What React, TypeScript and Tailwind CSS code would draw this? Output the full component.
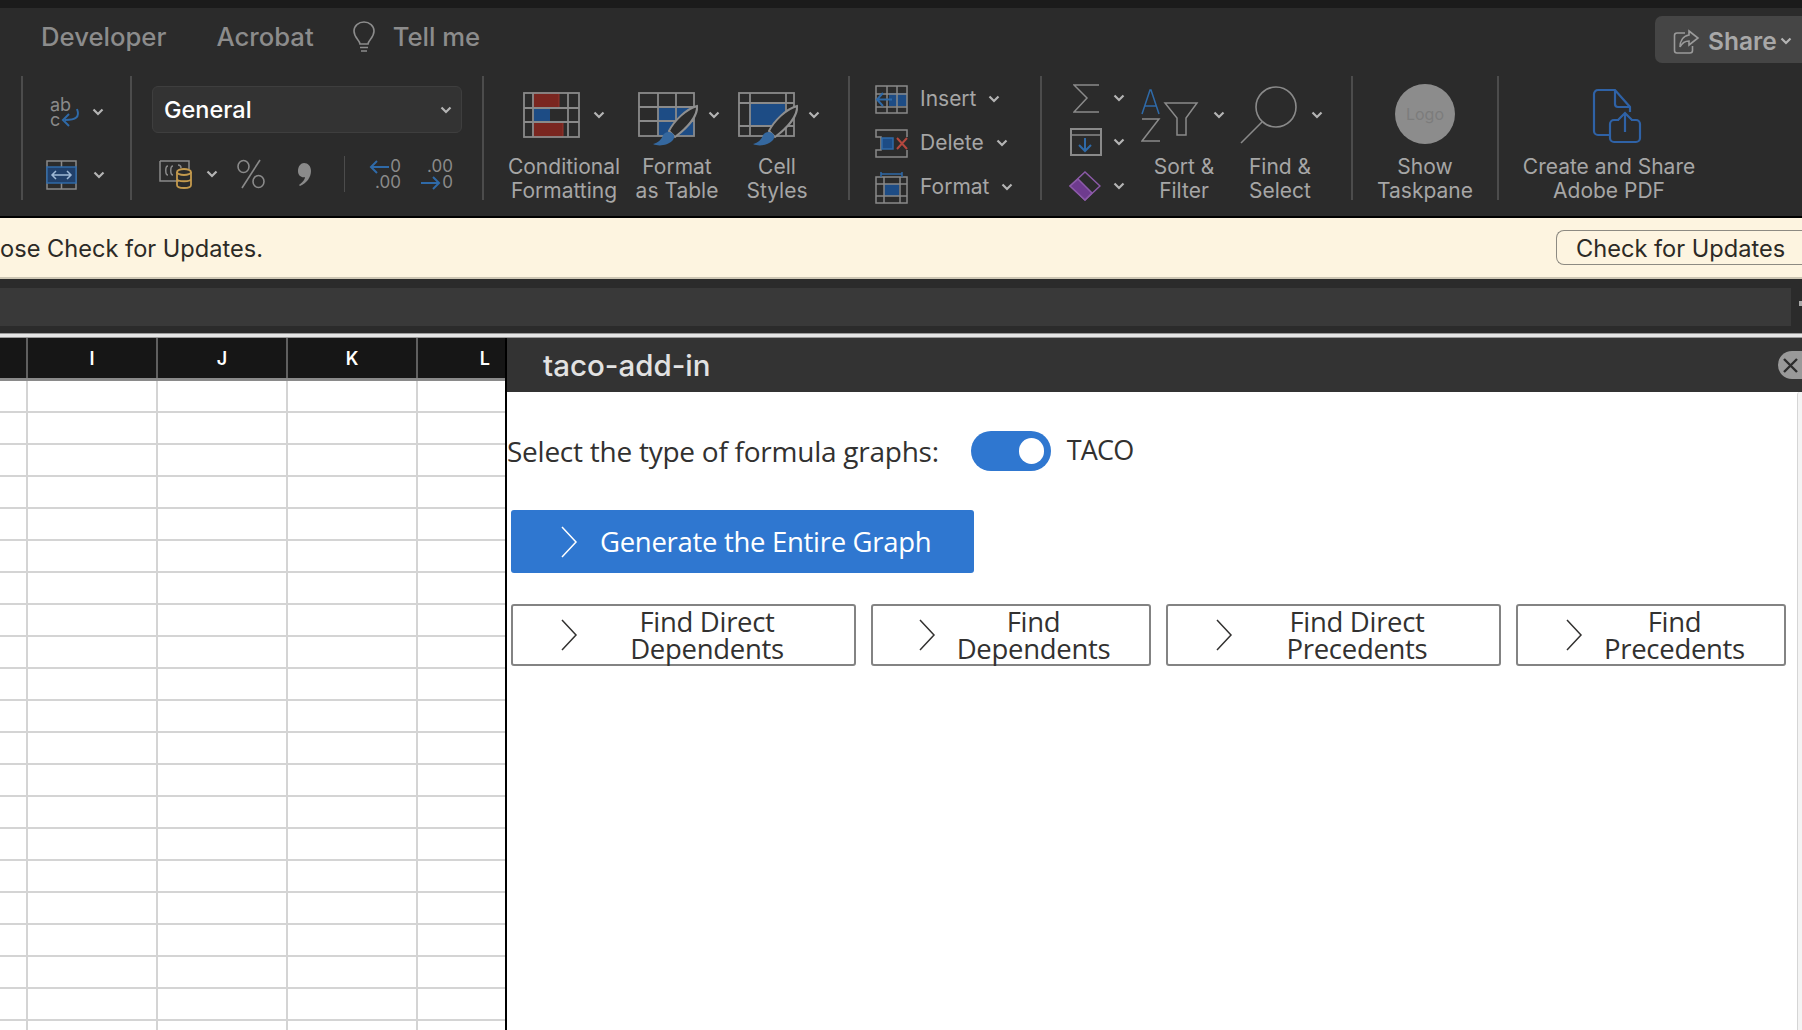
import React from "react";

const G = "#8a8a8a";
const B = "#2f6aa8";
const F = "#1d4c85";
const R = "#7a2620";

const Chev = ({ className = "", color = "#b4b4b4" }: { className?: string; color?: string }) => (
  <svg width="12" height="8" viewBox="0 0 12 8" className={className} fill="none" stroke={color} strokeWidth="2.2">
    <path d="M1.5 1.5 6 6l4.5-4.5" />
  </svg>
);

const Sep = () => <div className="w-[2px] shrink-0 bg-[#4c4c4c]" />;

const GridLines = ({ x, y, w, h, cols, rows, sw = 1.5 }: { x: number; y: number; w: number; h: number; cols: number[]; rows: number[]; sw?: number }) => (
  <g fill="none" stroke={G} strokeWidth={sw}>
    <rect x={x} y={y} width={w} height={h} />
    {cols.map((c) => (
      <path key={"c" + c} d={`M${x + c} ${y}v${h}`} />
    ))}
    {rows.map((r) => (
      <path key={"r" + r} d={`M${x} ${y + r}h${w}`} />
    ))}
  </g>
);

const CondIcon = () => (
  <svg width="58" height="46" viewBox="0 0 58 46">
    <rect x="10" y="1" width="26" height="15" fill={R} stroke="#94352d" />
    <rect x="10" y="16" width="17" height="14" fill={F} />
    <rect x="10" y="30" width="30" height="15" fill={R} stroke="#94352d" />
    <GridLines x={1} y={1} w={55} h={44} cols={[9, 44]} rows={[15, 29]} sw={1.8} />
  </svg>
);

const Brush = () => (
  <g>
    <path d="M31 39C36 29 48 17 59 14 60 24 49 36 37 45z" fill="#2b2b2b" stroke="#8f8f8f" strokeWidth="2" />
    <path d="M15 52c6 3 15 1 19-3 3-3 3-6 0-8-3-2-7-1-9 2-1 4-5 8-10 9z" fill="#35689f" />
  </g>
);

const TableIcon = () => (
  <svg width="62" height="56" viewBox="0 0 62 56">
    <rect x="20" y="15" width="37" height="29" fill={F} />
    <GridLines x={1} y={1} w={55} h={43} cols={[19, 37]} rows={[14, 28]} sw={1.8} />
    <Brush />
  </svg>
);

const StyleIcon = () => (
  <svg width="62" height="56" viewBox="0 0 62 56">
    <rect x="11" y="11" width="36" height="22" fill={F} />
    <GridLines x={1} y={1} w={55} h={43} cols={[11, 47]} rows={[10, 33]} sw={1.8} />
    <Brush />
  </svg>
);

const Large = ({ w, icon, iconW, lines, chev = true }: { w: number; icon: React.ReactNode; iconW: number; lines: string[]; chev?: boolean }) => (
  <div className="flex shrink-0 flex-col items-center" style={{ width: w }}>
    <div className="flex h-[79px] shrink-0 items-start pt-[16px]">
      <div style={{ width: iconW }}>{icon}</div>
      {chev && <Chev className="mt-[19px]" />}
    </div>
    <div className="whitespace-nowrap text-center text-[21px] leading-[24px] text-[#a6a6a6]">
      {lines.map((l) => (
        <div key={l}>{l}</div>
      ))}
    </div>
  </div>
);

const CellRow = ({ icon, label }: { icon: React.ReactNode; label: string }) => (
  <div className="flex h-[44px] shrink-0 items-center pl-[25px]">
    <div className="flex w-[33px] justify-center">{icon}</div>
    <span className="ml-[12px] text-[21px] text-[#a6a6a6]">{label}</span>
    <Chev className="ml-[12px]" />
  </div>
);

const cols = [28, 130, 130, 130, 87];
const headers = ["", "I", "J", "K", "L"];

const FindBtn = ({ lines, w, chevL }: { lines: string[]; w: number; chevL: number }) => (
  <button className="flex h-[62px] shrink-0 items-center rounded-[3px] border-2 border-[#838383] bg-white pr-[19px] text-[#323130]" style={{ width: w }}>
    <svg width="20" height="34" viewBox="0 0 20 34" fill="none" stroke="#323130" strokeWidth="1.5" className="shrink-0" style={{ marginLeft: chevL }}>
      <path d="M3 2l14 15L3 32" />
    </svg>
    <span className="flex-1 text-center text-[27.5px] leading-[27.5px] tracking-[-0.3px]">
      {lines.map((l) => (
        <span key={l} className="block">{l}</span>
      ))}
    </span>
  </button>
);

export default function App() {
  return (
    <div className="flex h-[1030px] w-[1802px] flex-col overflow-hidden bg-white font-['Inter','Liberation_Sans',sans-serif]">
      <div className="h-[8px] shrink-0 bg-[#1b1b1b]" />
      {/* ribbon */}
      <div className="flex h-[208px] shrink-0 flex-col bg-[#2b2b2b]">
        <div className="flex h-[68px] shrink-0 items-start">
          <div className="flex h-[58px] items-center pl-[41px] text-[25.7px] font-medium text-[#8c8c8c]">
            <span>Developer</span>
            <span className="ml-[50px]">Acrobat</span>
            <svg width="24" height="32" viewBox="0 0 24 32" fill="none" stroke="#8c8c8c" strokeWidth="1.6" className="ml-[38px]">
              <path d="M8 23c0-4-6-6-6-13a10 9 0 0 1 20 0c0 7-6 9-6 13z" />
              <path d="M8 26.5h8M9 30h6" />
            </svg>
            <span className="ml-[17px]">Tell me</span>
          </div>
          <div className="ml-auto mt-[8px] flex h-[47px] w-[147px] items-center rounded-l-[7px] bg-[#454545] pl-[18px] pt-[3px]">
            <svg width="27" height="25" viewBox="0 0 27 25" fill="none" stroke="#9a9a9a" strokeWidth="1.6">
              <path d="M12 4H4a2.5 2.5 0 0 0-2.5 2.5v15A2.5 2.5 0 0 0 4 24h13a2.5 2.5 0 0 0 2.5-2.5V17" />
              <path d="M16 2l9 7-9 7v-4c-4 0-7 2-9 6 0-6 3-11 9-12z" />
            </svg>
            <span className="ml-[8px] text-[24.5px] font-semibold text-[#a8a8a8]">Share</span>
            <Chev className="ml-[3px]" />
          </div>
        </div>
        <div className="flex h-[124px] shrink-0">
          <div className="w-[21px] shrink-0" />
          <Sep />
          {/* alignment */}
          <div className="flex w-[107px] shrink-0 flex-col pt-[20px]">
            <div className="flex h-[32px] items-center pl-[27px]">
              <div className="relative h-[30px] w-[30px] text-[18px] leading-[15px] text-[#8a8a8a]">
                <div>ab</div>
                <div>c</div>
                <svg width="22" height="20" viewBox="0 0 22 20" fill="none" stroke={B} strokeWidth="2" className="absolute left-[10px] top-[11px]">
                  <path d="M17 1c3 8-1 11-12 11M9 6l-6 6 6 6" />
                </svg>
              </div>
              <Chev className="ml-[12px]" />
            </div>
            <div className="mt-[31px] flex h-[32px] items-center pl-[23px]">
              <svg width="31" height="30" viewBox="0 0 31 30" fill="none">
                <rect x="1" y="1" width="29" height="28" stroke={G} strokeWidth="1.5" />
                <path d="M15.5 1v6M15.5 23v6" stroke={G} strokeWidth="1.5" />
                <rect x="1" y="7" width="29" height="16" fill="#21406a" stroke={B} strokeWidth="1.5" />
                <path d="M6 15h19M10 11l-4 4 4 4M21 11l4 4-4 4" stroke="#9fb9d6" strokeWidth="1.5" />
              </svg>
              <Chev className="ml-[16px]" />
            </div>
          </div>
          <Sep />
          {/* number */}
          <div className="flex w-[350px] shrink-0 flex-col pl-[20px] pt-[10px]">
            <div className="flex h-[47px] w-[310px] items-center justify-between rounded-[6px] border border-[#3e3e3e] bg-[#333333] pl-[11px] pr-[9px] text-[23.5px] font-medium text-white">
              <span>General</span>
              <Chev />
            </div>
            <div className="mt-[23px] flex h-[36px] items-center">
              <svg width="34" height="30" viewBox="0 0 34 30" fill="none" className="ml-[7px]">
                <path d="M1 2h29v8M20 22H1V2" stroke={G} strokeWidth="1.5" />
                <path d="M9 7c-3 0-3 9 0 9M14 7c-3 0-3 9 0 9M19 6c2 0 3 1 3 3" stroke={G} strokeWidth="1.5" />
                <ellipse cx="25" cy="13" rx="7" ry="3" stroke="#c49a4d" strokeWidth="1.8" />
                <path d="M18 13v13c0 4 14 4 14 0V13M18 20c0 3 14 3 14 0" stroke="#c49a4d" strokeWidth="1.8" />
              </svg>
              <Chev className="ml-[13px]" />
              <svg width="30" height="30" viewBox="0 0 30 30" fill="none" stroke={G} strokeWidth="1.6" className="ml-[18px]">
                <ellipse cx="7.5" cy="7.5" rx="5.5" ry="6" />
                <ellipse cx="22.5" cy="22.5" rx="5.5" ry="6" />
                <path d="M24 1 6 29" />
              </svg>
              <svg width="15" height="25" viewBox="0 0 15 25" fill={G} className="ml-[31px]">
                <path d="M7 1c4 0 7 3 7 8 0 6-4 12-11 15l-1-1c4-3 6-6 6-8-3 1-7-1-7-6 0-5 3-8 6-8z" />
              </svg>
              <div className="ml-[32px] h-[36px] w-[1px] bg-[#4c4c4c]" />
              <div className="relative ml-[24px] h-[32px] w-[32px] text-right text-[17px] leading-[16px] text-[#8a8a8a]">
                <svg width="20" height="14" viewBox="0 0 20 14" fill="none" stroke={B} strokeWidth="2" className="absolute left-0 top-[2px]">
                  <path d="M20 7H2M8 1 2 7l6 6" />
                </svg>
                <div>0</div>
                <div>.00</div>
              </div>
              <div className="relative ml-[20px] h-[32px] w-[32px] text-right text-[17px] leading-[16px] text-[#8a8a8a]">
                <svg width="20" height="14" viewBox="0 0 20 14" fill="none" stroke={B} strokeWidth="2" className="absolute left-0 top-[18px]">
                  <path d="M0 7h18M12 1l6 6-6 6" />
                </svg>
                <div>.00</div>
                <div>0</div>
              </div>
            </div>
          </div>
          <Sep />
          {/* styles */}
          <div className="flex w-[364px] shrink-0 pl-[15px]">
            <Large w={130} icon={<CondIcon />} iconW={70} lines={["Conditional", "Formatting"]} />
            <Large w={96} icon={<div className="ml-[4px]"><TableIcon /></div>} iconW={74} lines={["Format", "as Table"]} />
            <Large w={104} icon={<div className="ml-[4px]"><StyleIcon /></div>} iconW={74} lines={["Cell", "Styles"]} />
          </div>
          <Sep />
          {/* cells */}
          <div className="flex w-[190px] shrink-0 flex-col pt-[1px]">
            <CellRow
              label="Insert"
              icon={
                <svg width="33" height="29" viewBox="0 0 33 29" fill="none">
                  <rect x="14" y="8" width="18" height="13" fill={F} />
                  <GridLines x={1} y={1} w={31} h={27} cols={[11, 21]} rows={[8, 21]} />
                  <path d="M17 14.5H2M8 8l-6 6.5L8 21" stroke={B} strokeWidth="2" />
                </svg>
              }
            />
            <CellRow
              label="Delete"
              icon={
                <svg width="33" height="29" viewBox="0 0 33 29" fill="none">
                  <path d="M32 8V1H1v7h5v13H1v7h31v-7" stroke={G} strokeWidth="1.5" />
                  <rect x="7" y="9" width="11" height="11" fill={F} stroke={B} strokeWidth="1.5" />
                  <path d="M22 9l10 11M32 9 22 20" stroke="#b5483f" strokeWidth="2" />
                </svg>
              }
            />
            <CellRow
              label="Format"
              icon={
                <svg width="33" height="33" viewBox="0 0 33 33" fill="none">
                  <rect x="9" y="13" width="15" height="12" fill={F} />
                  <GridLines x={1} y={6} w={31} h={26} cols={[8, 24]} rows={[7, 19]} />
                  <path d="M6 1v5M27 1v5M6 3h21" stroke={B} strokeWidth="1.5" />
                </svg>
              }
            />
          </div>
          <Sep />
          {/* editing */}
          <div className="flex w-[309px] shrink-0">
            <div className="flex w-[89px] shrink-0 flex-col items-start pl-[31px]">
              <div className="flex h-[44px] shrink-0 items-center">
                <svg width="26" height="29" viewBox="0 0 26 29" fill="none" stroke={G} strokeWidth="1.5"><path d="M26 1H1l13 13L1 28h25" /></svg>
                <Chev className="ml-[14px]" />
              </div>
              <div className="flex h-[44px] shrink-0 items-center">
                <svg width="32" height="28" viewBox="0 0 32 28" fill="none" className="-ml-[3px]">
                  <rect x="1" y="1" width="30" height="26" stroke={G} strokeWidth="2" />
                  <path d="M1 7h30" stroke={G} strokeWidth="1.5" />
                  <path d="M15 10v13M9 17l6 6 6-6" stroke={B} strokeWidth="2" />
                </svg>
                <Chev className="ml-[11px]" />
              </div>
              <div className="flex h-[44px] shrink-0 items-center">
                <svg width="32" height="30" viewBox="0 0 32 30" fill="none" className="-ml-[4px]">
                  <path d="M1 15 16 1l15 14-15 14z" stroke="#8c5aa8" strokeWidth="1.5" />
                  <path d="M1 15l8-7 14 14-7 7z" fill="#6e3b8e" stroke="#8c5aa8" strokeWidth="1.5" />
                </svg>
                <Chev className="ml-[12px]" />
              </div>
            </div>
            <Large
              w={106}
              iconW={70}
              lines={["Sort &", "Filter"]}
              icon={
                <svg width="58" height="54" viewBox="0 0 58 54" fill="none" className="-mt-[4px] -ml-[2px]">
                  <path d="M1 26 9 2l1 0 8 24M4 18h11" stroke={B} strokeWidth="1.5" />
                  <path d="M1 31h17L1 53h18" stroke={G} strokeWidth="1.5" />
                  <path d="M24 15h32L45 30v17h-9V30z" stroke={G} strokeWidth="1.5" />
                </svg>
              }
            />
            <Large
              w={86}
              iconW={74}
              lines={["Find &", "Select"]}
              icon={
                <svg width="58" height="58" viewBox="0 0 58 58" fill="none" className="-mt-[6px] ml-[3px]">
                  <ellipse cx="36" cy="21" rx="20" ry="20" stroke={G} strokeWidth="1.6" />
                  <path d="M22 36 1 57" stroke={G} strokeWidth="1.6" />
                </svg>
              }
            />
          </div>
          <Sep />
          {/* taskpane */}
          <div className="flex w-[144px] shrink-0 justify-center">
            <Large
              w={144}
              iconW={60}
              chev={false}
              lines={["Show", "Taskpane"]}
              icon={
                <div className="-mt-[8px] flex h-[60px] w-[60px] items-center justify-center rounded-full bg-[#8c8c8c] text-[16px] text-[#7c7c7c]">Logo</div>
              }
            />
          </div>
          <Sep />
          {/* pdf */}
          <div className="flex flex-1 pl-[8px]">
            <Large
              w={204}
              iconW={50}
              chev={false}
              lines={["Create and Share", "Adobe PDF"]}
              icon={
                <svg width="50" height="56" viewBox="0 0 50 56" fill="none" stroke="#2f62a6" strokeWidth="2.2" className="-mt-[4px] ml-[8px]">
                  <path d="M18 47H6a4 4 0 0 1-4-4V6a4 4 0 0 1 4-4h17l15 17v5M23 2v14a3 3 0 0 0 3 3h12" />
                  <path d="M18 36v14a4 4 0 0 0 4 4h22a4 4 0 0 0 4-4V36a4 4 0 0 0-4-4h-5M27 32h-5a4 4 0 0 0-4 4M33 44V26M26 32l7-7 7 7" />
                </svg>
              }
            />
          </div>
        </div>
      </div>
      <div className="h-[2px] shrink-0 bg-black" />
      {/* message bar */}
      <div className="flex h-[61px] shrink-0 items-center justify-between border-b-2 border-[#cdc6b4] bg-[#fdf4e0] text-[23.6px] text-[#2c2a26]">
        <div className="flex w-[263px] justify-end overflow-hidden whitespace-nowrap pt-[2px]">
          <span>Choose Check for Updates.</span>
        </div>
        <div className="flex h-[35px] w-[246px] items-center rounded-l-[8px] border border-r-0 border-[#8d8a82] pl-[19px] pt-[2px]">Check for Updates</div>
      </div>
      {/* formula bar */}
      <div className="flex h-[54px] shrink-0 items-start justify-between bg-[#2b2b2b] pt-[9px]">
        <div className="h-[38px] w-[1791px] bg-[#393939]" />
        <div className="mt-[13px] h-[5px] w-[3px] bg-[#a8a8a8]" />
      </div>
      <div className="h-[5px] shrink-0 border-y border-[#9b9b9b] bg-[#e6e6e6]" />
      {/* body */}
      <div className="flex min-h-0 flex-1">
        <div className="flex w-[505px] shrink-0 flex-col">
          <div className="flex h-[43px] shrink-0 border-b-[3px] border-[#8a8a8a] bg-[#161616]">
            {cols.map((w, i) => (
              <div
                key={i}
                className={`flex items-center text-[18px] font-semibold text-white ${i === 4 ? "justify-end pr-[15px]" : "justify-center border-r-2 border-[#5f5f5f]"}`}
                style={{ width: w }}
              >
                {headers[i]}
              </div>
            ))}
          </div>
          <div className="min-h-0 flex-1 overflow-hidden">
            {Array.from({ length: 21 }).map((_, r) => (
              <div key={r} className="flex h-[32px]">
                {cols.map((w, i) => (
                  <div key={i} className={`h-full border-b-2 border-[#d4d4d4] ${i < 4 ? "border-r-2" : ""}`} style={{ width: w }} />
                ))}
              </div>
            ))}
          </div>
        </div>
        <div className="w-[2px] shrink-0 bg-black" />
        {/* task pane */}
        <div className="flex min-w-0 flex-1 flex-col font-['Open_Sans',sans-serif]">
          <div className="flex h-[54px] shrink-0 items-center justify-between bg-[#333333]">
            <span className="ml-[36px] font-['Inter'] text-[29.5px] font-medium text-[#e2e2e2]">taco-add-in</span>
            <div className="flex h-[28px] w-[24px] items-center justify-start rounded-l-full bg-[#999999] pl-[4px]">
              <svg width="17" height="17" viewBox="0 0 17 17" stroke="#2c2c2c" strokeWidth="2.4"><path d="M2 2l13 13M15 2 2 15" /></svg>
            </div>
          </div>
          <div className="flex min-h-0 flex-1">
            <div className="min-w-0 flex-1 pt-[38px]">
              <div className="flex h-[41px] items-center">
                <span className="text-[28px] font-medium tracking-[-0.25px] text-[#323130]">Select the type of formula graphs:</span>
                <div className="ml-[32px] flex h-[40px] w-[80px] items-center justify-end rounded-full bg-[#2f77d0] pr-[7px]">
                  <div className="h-[26px] w-[25px] rounded-full bg-white" />
                </div>
                <span className="ml-[16px] text-[27px] tracking-[-0.8px] text-[#323130]">TACO</span>
              </div>
              <div className="mt-[39px] pl-[4px]">
                <button className="flex h-[63px] w-[463px] items-center rounded-[3px] bg-[#2f77d0] pl-[48px] text-white">
                  <svg width="20" height="34" viewBox="0 0 20 34" fill="none" stroke="white" strokeWidth="1.5"><path d="M3 2l14 15L3 32" /></svg>
                  <span className="ml-[21px] text-[27.5px] font-medium tracking-[-0.3px]">Generate the Entire Graph</span>
                </button>
              </div>
              <div className="mt-[31px] flex gap-[15px] pl-[4px]">
                <FindBtn lines={["Find Direct", "Dependents"]} w={345} chevL={46} />
                <FindBtn lines={["Find", "Dependents"]} w={280} chevL={44} />
                <FindBtn lines={["Find Direct", "Precedents"]} w={335} chevL={46} />
                <FindBtn lines={["Find", "Precedents"]} w={270} chevL={46} />
              </div>
            </div>
            <div className="w-[5px] shrink-0 rounded-tl-[3px] border-l border-[#d5d5d5] bg-[#f4f4f4]" />
          </div>
        </div>
      </div>
    </div>
  );
}
